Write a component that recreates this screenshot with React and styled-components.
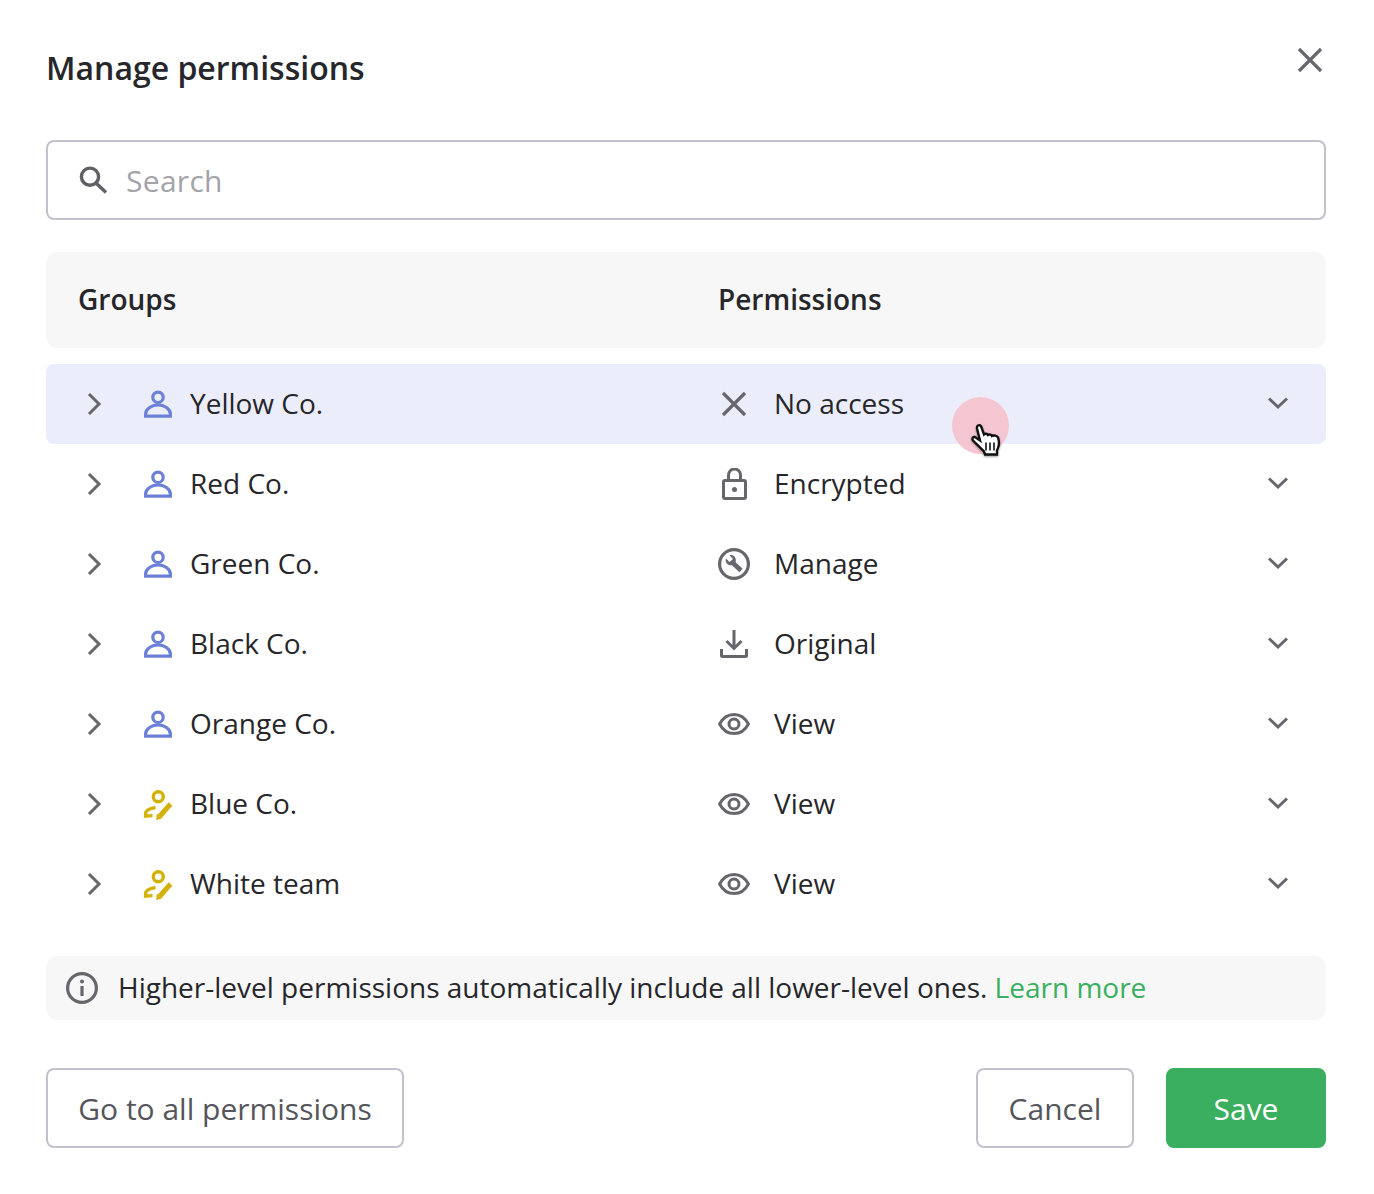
import React from "react"
import styled, { createGlobalStyle } from "styled-components"

const GlobalStyle = createGlobalStyle`
  html, body {
    margin: 0;
    padding: 0;
    background: #fff;
  }
  body {
    font-family: "Open Sans", "Liberation Sans", sans-serif;
    color: #26262b;
  }
  * {
    box-sizing: border-box;
  }
`

const Dialog = styled.div`
  width: 1374px;
  height: 1194px;
  padding: 46px 48px 46px 46px;
  display: flex;
  flex-direction: column;
  background: #fff;
`

const Header = styled.header`
  height: 94px;
  display: flex;
  justify-content: space-between;
  align-items: flex-start;
`

const Title = styled.h1`
  margin: 0;
  font-size: 32px;
  line-height: 44px;
  font-weight: 600;
  color: #26262b;
`

const CloseButton = styled.button`
  width: 32px;
  height: 32px;
  margin: -2px 0 0;
  padding: 0;
  border: 0;
  background: none;
  display: flex;
  color: #66666c;
`

const SearchBox = styled.label`
  height: 80px;
  flex: none;
  padding: 0 30px;
  display: flex;
  align-items: center;
  gap: 16px;
  border: 2px solid #c2c2ca;
  border-radius: 8px;
  color: #5f5f66;
`

const SearchInput = styled.input`
  flex: 1;
  border: 0;
  outline: 0;
  padding: 0;
  font: 400 30px "Open Sans", sans-serif;
  letter-spacing: 0.3px;
  color: #26262b;
  &::placeholder {
    color: #a3a3aa;
    opacity: 1;
  }
`

const TableHead = styled.div`
  height: 96px;
  flex: none;
  margin: 32px 0 16px;
  padding: 0 32px 3px;
  display: grid;
  grid-template-columns: 640px 1fr;
  align-items: center;
  background: #f7f7f7;
  border-radius: 12px;
  font-size: 28px;
  font-weight: 600;
  color: #26262b;
`

const Row = styled.div`
  position: relative;
  height: 80px;
  padding: 0 32px;
  display: grid;
  grid-template-columns: 640px 1fr 32px;
  align-items: center;
  border-radius: 8px;
  background: ${(p) => (p.$active ? "#ebeefa" : "transparent")};
  font-size: 28px;
`

const Cell = styled.div`
  display: flex;
  align-items: center;
  color: #26262b;
`

const Label = styled.span`
  margin-bottom: 2px;
`

const IconBox = styled.span`
  width: 32px;
  height: 32px;
  flex: none;
  display: flex;
  color: ${(p) => p.$color || "#66666c"};
  margin-right: ${(p) => p.$gap || 0}px;
`

const Ripple = styled.span`
  position: absolute;
  left: 906px;
  top: 33px;
  width: 57px;
  height: 57px;
  border-radius: 50%;
  background: #f4c6d1;
`

const Pointer = styled.svg`
  position: absolute;
  left: 924px;
  top: 59px;
  width: 32px;
  height: 35px;
  filter: drop-shadow(0 1px 1px rgba(0, 0, 0, 0.4));
`

const InfoBar = styled.div`
  height: 64px;
  flex: none;
  margin-top: 32px;
  padding: 0 20px;
  display: flex;
  align-items: center;
  gap: 20px;
  background: #f7f7f7;
  border-radius: 12px;
  font-size: 28px;
  color: #26262b;
  white-space: nowrap;
`

const LearnMore = styled.a`
  color: #3aaf5f;
  text-decoration: none;
`

const Footer = styled.footer`
  margin-top: 48px;
  display: flex;
  align-items: center;
  gap: 32px;
`

const Button = styled.button`
  height: 80px;
  padding: 0 30px;
  font: 400 30px "Open Sans", sans-serif;
  border-radius: 8px;
  border: 2px solid ${(p) => (p.$primary ? "#3aaf5f" : "#c2c2ca")};
  background: ${(p) => (p.$primary ? "#3aaf5f" : "#fff")};
  color: ${(p) => (p.$primary ? "#fff" : "#55555c")};
  width: ${(p) => p.$width}px;
  margin-right: ${(p) => (p.$push ? "auto" : 0)};
`

const Svg = ({ children }) => (
  <svg width="32" height="32" viewBox="0 0 32 32" fill="none" stroke="currentColor" strokeWidth="3">
    {children}
  </svg>
)

const ChevronRight = () => <Svg><path d="M11 6 L21 16 L11 26" /></Svg>
const ChevronDown = () => <Svg><path d="M7 10.5 L16 19 L25 10.5" /></Svg>
const Cross = () => <Svg><path d="M5 5 L27 27 M27 5 L5 27" strokeWidth="3.2" /></Svg>

const UserIcon = () => (
  <Svg>
    <circle cx="16" cy="9.3" r="5.2" strokeWidth="3.2" />
    <path d="M3.6 28.2 V26 C3.6 21 10 16.8 16 16.8 C22 16.8 28.4 21 28.4 26 V28.2 Z" strokeWidth="3.2" />
  </Svg>
)

const EditorIcon = () => (
  <Svg>
    <circle cx="16.3" cy="8.7" r="5" strokeWidth="3.4" />
    <path d="M3.6 29.8 V25.5 C3.6 22.5 8 20.4 13.5 19.6" strokeWidth="3.4" />
    <path d="M2 27.8 H10.5" strokeWidth="3.2" />
    <path d="M17.5 28.5 L28.5 16" strokeWidth="5" />
    <path d="M14.2 32 L14.8 25.8 L20 30.5 Z" fill="currentColor" stroke="none" />
  </Svg>
)

const LockIcon = () => (
  <Svg>
    <rect x="5.5" y="12.5" width="22" height="18" rx="1.5" />
    <path d="M10.5 12 V7 A6 6 0 0 1 22.5 7 V12" />
    <circle cx="16.5" cy="21.4" r="2.5" fill="currentColor" stroke="none" />
  </Svg>
)

const WrenchIcon = () => (
  <Svg>
    <circle cx="16" cy="16" r="14.4" strokeWidth="3.2" />
    <path d="M14 14 L23 22.5" strokeWidth="4.6" />
    <path d="M8 10.5 L11.5 14 L15 11 L11.5 7.2 C14.5 6.2 18 8.5 17.8 12.5 C17.7 15.8 14.2 18.2 11 17 C8.5 16 7 13 8 10.5 Z" fill="currentColor" stroke="none" />
  </Svg>
)

const DownloadIcon = () => (
  <Svg>
    <path d="M16 2 V20 M8.5 13 L16 20.5 L23.5 13" />
    <path d="M3.5 21 V27.5 Q3.5 28.5 4.5 28.5 H27.5 Q28.5 28.5 28.5 27.5 V21" />
  </Svg>
)

const EyeIcon = () => (
  <Svg>
    <path d="M1.6 16 C5 9.5 10 6.4 16 6.4 C22 6.4 27 9.5 30.4 16 C27 22.5 22 25.6 16 25.6 C10 25.6 5 22.5 1.6 16 Z" />
    <circle cx="16" cy="16" r="5" />
  </Svg>
)

const SearchIcon = () => (
  <Svg>
    <circle cx="12" cy="12.7" r="8.6" strokeWidth="3.4" />
    <path d="M18.5 19.5 L28 28.5" strokeWidth="3.4" />
  </Svg>
)

const InfoIcon = () => (
  <Svg>
    <circle cx="16" cy="16" r="14.4" strokeWidth="3.2" />
    <path d="M16 14 V24" strokeWidth="3.2" />
    <circle cx="16" cy="9.5" r="2" fill="currentColor" stroke="none" />
  </Svg>
)

const rows = [
  { name: "Yellow Co.", Owner: UserIcon, color: "#6c80d8", perm: "No access", Perm: Cross, active: true },
  { name: "Red Co.", Owner: UserIcon, color: "#6c80d8", perm: "Encrypted", Perm: LockIcon },
  { name: "Green Co.", Owner: UserIcon, color: "#6c80d8", perm: "Manage", Perm: WrenchIcon },
  { name: "Black Co.", Owner: UserIcon, color: "#6c80d8", perm: "Original", Perm: DownloadIcon },
  { name: "Orange Co.", Owner: UserIcon, color: "#6c80d8", perm: "View", Perm: EyeIcon },
  { name: "Blue Co.", Owner: EditorIcon, color: "#d4b106", perm: "View", Perm: EyeIcon },
  { name: "White team", Owner: EditorIcon, color: "#d4b106", perm: "View", Perm: EyeIcon },
]

export default function App() {
  return (
    <Dialog>
      <GlobalStyle />
      <Header>
        <Title>Manage permissions</Title>
        <CloseButton aria-label="Close"><Cross /></CloseButton>
      </Header>
      <SearchBox>
        <SearchIcon />
        <SearchInput placeholder="Search" />
      </SearchBox>
      <TableHead>
        <span>Groups</span>
        <span>Permissions</span>
      </TableHead>
      {rows.map(({ name, Owner, color, perm, Perm, active }) => (
        <Row key={name} $active={active}>
          <Cell>
            <IconBox $gap={32}><ChevronRight /></IconBox>
            <IconBox $gap={16} $color={color}><Owner /></IconBox>
            <Label>{name}</Label>
          </Cell>
          <Cell>
            <IconBox $gap={24}><Perm /></IconBox>
            <Label>{perm}</Label>
          </Cell>
          <IconBox><ChevronDown /></IconBox>
          {active && (
            <>
              <Ripple />
              <Pointer viewBox="0 0 32 34">
                <path
                  d="M8 2 C9.5 1 11 2 11.5 4 L14 11 C15 10 17 10 18 11.5 C19.5 10.5 21.5 11 22 12.5 C24 11.5 27 12 28 14 C29.5 18 29 23 27 27 L27 31 L15 31 L14 28 L3 17 C1.5 15 3 13 5 13.5 L10 17 L7 5 C6.8 3.5 7 2.5 8 2 Z"
                  fill="#fff"
                  stroke="#111"
                  strokeWidth="2.4"
                />
                <path d="M16 19 V27 M20 19 V27 M24 19 V27" stroke="#111" strokeWidth="1.6" />
              </Pointer>
            </>
          )}
        </Row>
      ))}
      <InfoBar>
        <IconBox><InfoIcon /></IconBox>
        <Label>
          Higher-level permissions automatically include all lower-level ones. <LearnMore href="#">Learn more</LearnMore>
        </Label>
      </InfoBar>
      <Footer>
        <Button $width={358} $push>Go to all permissions</Button>
        <Button $width={158}>Cancel</Button>
        <Button $width={160} $primary>Save</Button>
      </Footer>
    </Dialog>
  )
}
